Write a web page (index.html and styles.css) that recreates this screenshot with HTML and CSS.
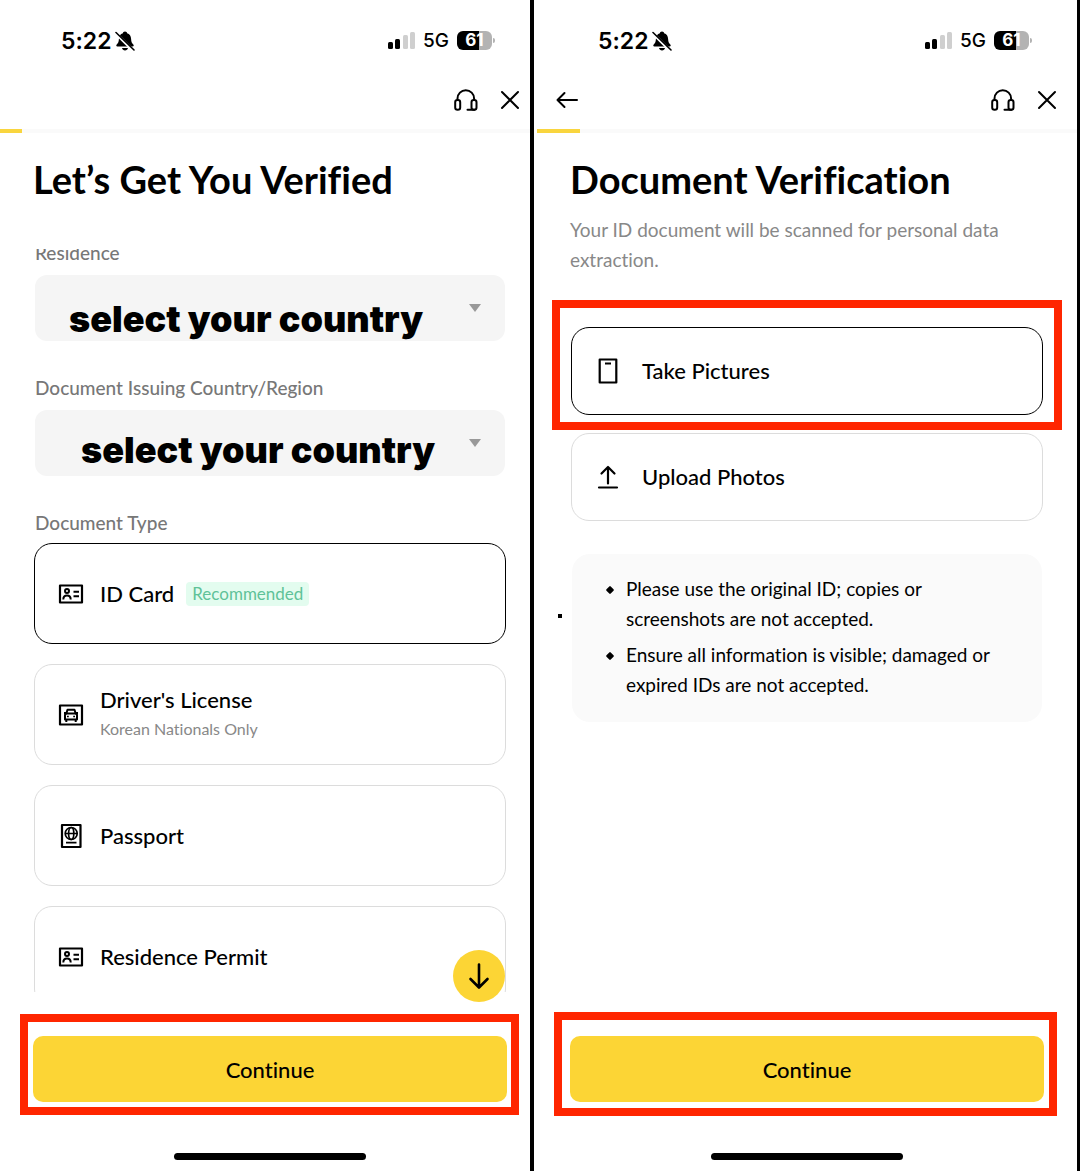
FILE: index.html
```html
<!DOCTYPE html>
<html lang="en">
<head>
    <meta charset="UTF-8">
    <meta name="viewport" content="width=device-width, initial-scale=1.0">
    <title>Identity Verification</title>
    <link rel="stylesheet" href="styles.css">
</head>
<body>
    <!-- Shared icons -->
    <svg class="sprite" aria-hidden="true">
        <symbol id="icon-bell-off" viewBox="0 0 20 20">
            <path d="M10 0.500c1.300 0 2 .8 2.100 1.700C14.700 3 16 5 16.100 8c.1 3 .9 4.200 2.200 5.500.8.900.5 2-.7 2H2.400c-1.200 0-1.500-1.100-.7-2C3 12.200 3.800 11 3.900 8 4 5 5.300 3 7.900 2.200 8 1.300 8.700.5 10 .5z"/>
            <path d="M7 17h6c-.3 1.600-1.500 2.500-3 2.500S7.300 18.600 7 17z"/>
            <path d="M0 1.500L18.500 20" stroke="#fff" stroke-width="3"/>
            <path d="M1 1.500L19 19" stroke="#000" stroke-width="1.600" stroke-linecap="round"/>
        </symbol>
        <symbol id="icon-signal" viewBox="0 0 27 17">
            <rect x="0" y="10" width="5" height="7" rx="1.500"/>
            <rect x="7" y="7" width="5" height="10" rx="1.500"/>
            <rect x="15" y="3" width="5" height="14" rx="1.500" fill="#cfcfcf"/>
            <rect x="22" y="0" width="5" height="17" rx="1.500" fill="#cfcfcf"/>
        </symbol>
        <symbol id="icon-headset" viewBox="0 0 24 24">
            <g fill="none" stroke="#000" stroke-width="2" stroke-linecap="round" stroke-linejoin="round">
                <path d="M3.500 12V10.500a8.300 8.300 0 0 1 16.600 0V12"/>
                <rect x="1.200" y="12" width="5" height="9.700" rx="2.300"/>
                <rect x="17.500" y="12" width="5" height="9.700" rx="2.300"/>
                <path d="M20.500 21.800H13.500"/>
            </g>
        </symbol>
        <symbol id="icon-close" viewBox="0 0 24 24">
            <path d="M4 4L20 20M20 4L4 20" fill="none" stroke="#000" stroke-width="2" stroke-linecap="round"/>
        </symbol>
        <symbol id="icon-back" viewBox="0 0 24 24">
            <path d="M22 12H2.500M9.500 5L2.500 12L9.500 19" fill="none" stroke="#000" stroke-width="2" stroke-linecap="round" stroke-linejoin="round"/>
        </symbol>
        <symbol id="icon-id" viewBox="0 0 28 28">
            <g fill="none" stroke="#000" stroke-width="2.200" stroke-linejoin="round">
                <rect x="3" y="5.500" width="22" height="17"/>
                <circle cx="10" cy="11" r="2" stroke-width="2"/>
                <path d="M6.300 19.500c0-2.900 1.500-4 3.700-4s3.700 1.100 3.700 4" stroke-width="2"/>
                <path d="M16.500 11.700H22M16.500 16.300H22" stroke-width="2"/>
            </g>
        </symbol>
        <symbol id="icon-car" viewBox="0 0 28 28">
            <g fill="none" stroke="#000" stroke-width="2.200" stroke-linejoin="round">
                <rect x="3" y="4.500" width="22" height="19"/>
                <path d="M9.300 12.500l1.200-3.700h7l1.200 3.700M8 18.500v-4.700l1.500-1.300h9l1.500 1.300v4.700z" stroke-width="2"/>
                <path d="M9.300 18.500v2.500M18.700 18.500v2.500M7 12h2M19 12h2" stroke-width="2"/>
                <path d="M10 15.600h1.800M16.200 15.600h1.800" stroke-width="1.500"/>
            </g>
        </symbol>
        <symbol id="icon-passport" viewBox="0 0 28 28">
            <g fill="none" stroke="#000" stroke-width="2.200" stroke-linejoin="round">
                <rect x="5" y="3" width="18.500" height="22"/>
                <g stroke-width="1.700">
                    <circle cx="14.200" cy="11.500" r="6"/>
                    <ellipse cx="14.200" cy="11.500" rx="2.600" ry="6"/>
                    <path d="M8.200 11.500h12M9 20.700h10.500"/>
                </g>
            </g>
        </symbol>
        <symbol id="icon-phone" viewBox="0 0 28 28">
            <path d="M5.700 2.500h16.600v23H5.700zM11 6.500h6" fill="none" stroke="#000" stroke-width="2.200" stroke-linejoin="round"/>
        </symbol>
        <symbol id="icon-upload" viewBox="0 0 28 28">
            <path d="M14 20.500V4M7.500 10.500L14 4l6.500 6.500M5 24.500h18" fill="none" stroke="#000" stroke-width="2.200" stroke-linecap="round" stroke-linejoin="round"/>
        </symbol>
        <symbol id="icon-down" viewBox="0 0 28 28">
            <path d="M14 2.500V25M5.500 17L14 25.500L22.500 17" fill="none" stroke="#000" stroke-width="2.600" stroke-linecap="round" stroke-linejoin="round"/>
        </symbol>
    </svg>

    <main class="screens">
        <!-- Step 1: document type -->
        <section class="screen screen-first">
            <div class="phone">
                <div class="status-bar">
                    <span class="time">5:22</span>
                    <svg class="bell"><use href="#icon-bell-off"/></svg>
                    <svg class="signal"><use href="#icon-signal"/></svg>
                    <span class="network">5G</span>
                    <span class="battery">61</span>
                </div>
                <nav class="nav-bar">
                    <button type="button" class="icon-button nav-right" aria-label="Support"><svg><use href="#icon-headset"/></svg></button>
                    <button type="button" class="icon-button" aria-label="Close"><svg><use href="#icon-close"/></svg></button>
                </nav>
                <div class="progress"><div class="progress-value" style="width: 4%"></div></div>

                <h1>Let’s Get You Verified</h1>

                <div class="scroll-wrap">
                    <form class="scroll-area">
                        <div class="form-group">
                            <label for="residence">Residence</label>
                            <div class="select-box">
                                <select id="residence">
                                    <option>select your country</option>
                                </select>
                            </div>
                        </div>
                        <div class="form-group">
                            <label for="issuing">Document Issuing Country/Region</label>
                            <div class="select-box">
                                <select id="issuing" class="indented">
                                    <option>select your country</option>
                                </select>
                            </div>
                        </div>
                        <fieldset class="doc-types">
                            <legend>Document Type</legend>
                            <label class="option">
                                <input type="radio" name="doc" checked>
                                <svg><use href="#icon-id"/></svg>
                                <span class="option-name">ID Card</span>
                                <span class="tag">Recommended</span>
                            </label>
                            <label class="option">
                                <input type="radio" name="doc">
                                <svg><use href="#icon-car"/></svg>
                                <span class="option-name">Driver's License<small>Korean Nationals Only</small></span>
                            </label>
                            <label class="option">
                                <input type="radio" name="doc">
                                <svg><use href="#icon-passport"/></svg>
                                <span class="option-name">Passport</span>
                            </label>
                            <label class="option">
                                <input type="radio" name="doc">
                                <svg><use href="#icon-id"/></svg>
                                <span class="option-name">Residence Permit</span>
                            </label>
                        </fieldset>
                    </form>
                    <button type="button" class="scroll-down" aria-label="Scroll down"><svg><use href="#icon-down"/></svg></button>
                </div>

                <div class="action marked">
                    <button type="button" class="continue">Continue</button>
                </div>
                <div class="home-indicator"></div>
            </div>
        </section>

        <!-- Step 2: document photos -->
        <section class="screen screen-second">
            <div class="phone">
                <div class="status-bar">
                    <span class="time">5:22</span>
                    <svg class="bell"><use href="#icon-bell-off"/></svg>
                    <svg class="signal"><use href="#icon-signal"/></svg>
                    <span class="network">5G</span>
                    <span class="battery">61</span>
                </div>
                <nav class="nav-bar">
                    <button type="button" class="icon-button" aria-label="Back"><svg><use href="#icon-back"/></svg></button>
                    <button type="button" class="icon-button nav-right" aria-label="Support"><svg><use href="#icon-headset"/></svg></button>
                    <button type="button" class="icon-button" aria-label="Close"><svg><use href="#icon-close"/></svg></button>
                </nav>
                <div class="progress"><div class="progress-value" style="width: 8%"></div></div>

                <h1>Document Verification</h1>
                <p class="subtitle">Your ID document will be scanned for personal data extraction.</p>

                <form class="methods">
                    <div class="marked">
                        <label class="option">
                            <input type="radio" name="method" checked>
                            <svg><use href="#icon-phone"/></svg>
                            <span class="option-name">Take Pictures</span>
                        </label>
                    </div>
                    <label class="option">
                        <input type="radio" name="method">
                        <svg><use href="#icon-upload"/></svg>
                        <span class="option-name">Upload Photos</span>
                    </label>
                </form>

                <div class="notice">
                    <ul>
                        <li>Please use the original ID; copies or screenshots are not accepted.</li>
                        <li>Ensure all information is visible; damaged or expired IDs are not accepted.</li>
                    </ul>
                </div>

                <div class="action marked">
                    <button type="button" class="continue">Continue</button>
                </div>
                <div class="home-indicator"></div>
            </div>
        </section>
    </main>
</body>
</html>
```
FILE: styles.css
```css
* {
    margin: 0;
    padding: 0;
    box-sizing: border-box;
}

body {
    font-family: Lato, "Open Sans", sans-serif;
    font-size: 20px;
    font-variant-ligatures: none;
    color: #000;
    background: #fff;
}

button {
    font: inherit;
    font-variant-ligatures: none;
    color: inherit;
    border: none;
    background: none;
    cursor: pointer;
}

.sprite {
    display: none;
}

.screens {
    display: grid;
    grid-template-columns: 89fr 91fr;
    height: 100vh;
    min-height: 1100px;
}

.screen {
    min-width: 0;
    min-height: 0;
    overflow: hidden;
}

.screen-first {
    border-right: 4px solid #000;
}

.screen-second {
    padding-left: 3px;
    border-right: 3px solid #000;
}

.phone {
    height: 100%;
    display: flex;
    flex-direction: column;
}

/* The first phone runs on under the divider */
.screen-first .phone {
    margin-right: -10px;
}

/* Status bar */
.status-bar {
    height: 80px;
    padding: 1px 45px 0 61px;
    display: flex;
    align-items: center;
    font-family: Inter, sans-serif;
}

.time {
    font-size: 23px;
    font-weight: 600;
}

.bell {
    width: 20px;
    height: 20px;
    margin-left: 4px;
}

.signal {
    width: 27px;
    height: 17px;
    margin-left: auto;
}

.network {
    margin: 0 8px;
    font-size: 19px;
    font-weight: 500;
}

.battery {
    position: relative;
    width: 35px;
    height: 19px;
    margin-right: 3px;
    border-radius: 6px;
    background: linear-gradient(to right, #000 62%, #b3b3b3 62%);
    color: #fff;
    font-size: 17px;
    font-weight: 700;
    line-height: 19px;
    text-align: center;
}

.battery::after {
    content: "";
    position: absolute;
    top: 7px;
    right: -3px;
    width: 2px;
    height: 5px;
    border-radius: 0 2px 2px 0;
    background: #b3b3b3;
}

/* Navigation */
.nav-bar {
    height: 40px;
    padding: 0 18px;
    margin-bottom: 9px;
    display: flex;
    align-items: center;
    gap: 20px;
}

.icon-button,
.icon-button svg {
    display: block;
    width: 24px;
    height: 24px;
}

.nav-right {
    margin-left: auto;
}

.progress {
    height: 4px;
    background: #fafafa;
}

.progress-value {
    height: 4px;
    background: #f9d53e;
}

h1 {
    margin: 24px 33px 0;
    font-size: 38px;
    font-weight: 700;
    line-height: 44px;
}

/* Document type form */
.scroll-wrap {
    position: relative;
    flex: 1;
    min-height: 0;
    margin: 48px 34px 0;
}

.scroll-area {
    height: 100%;
    overflow: hidden;
}

.form-group {
    margin: 0 1px 37px;
}

/* Scrolled a little past the first label */
.form-group:first-child {
    margin-top: -6px;
}

.form-group label,
legend {
    display: block;
    color: #777;
    font-size: 19px;
    font-weight: 500;
    line-height: 20px;
}

.select-box {
    position: relative;
    margin-top: 12px;
}

.select-box::after {
    content: "";
    position: absolute;
    top: 29px;
    right: 24px;
    border: 6px solid transparent;
    border-top: 8px solid #999;
    border-bottom: none;
}

select {
    display: block;
    width: 100%;
    height: 66px;
    padding: 22px 34px 0;
    appearance: none;
    border: none;
    border-radius: 12px;
    background: #f5f5f5;
    color: #000;
    font-family: Inter, sans-serif;
    font-size: 36px;
    font-weight: 900;
}

select.indented {
    padding: 14px 24px 0 46px;
}

.doc-types {
    border: none;
}

.doc-types .option {
    height: 101px;
    margin-bottom: 20px;
}

legend {
    margin-bottom: 10px;
    padding: 0 1px;
}

.option {
    position: relative;
    display: flex;
    align-items: center;
    gap: 12px;
    padding: 0 22px;
    border: 1px solid #dcdcdc;
    border-radius: 18px;
    cursor: pointer;
}

.option:has(input:checked) {
    border-color: #000;
}

.option input {
    position: absolute;
    opacity: 0;
}

.option svg {
    flex: none;
    width: 28px;
    height: 28px;
    margin-right: 3px;
}

.option-name {
    font-size: 22px;
    font-weight: 500;
    line-height: 28px;
}

.option-name small {
    display: block;
    color: #888;
    font-size: 16px;
    font-weight: 400;
    line-height: 30px;
}

.tag {
    padding: 0 6px;
    border-radius: 4px;
    background: #e3fcef;
    color: #5fc298;
    font-size: 17px;
    line-height: 24px;
}

.scroll-down {
    position: absolute;
    right: 1px;
    bottom: -10px;
    width: 52px;
    height: 52px;
    border-radius: 50%;
    background: #fcd535;
}

.scroll-down svg {
    display: block;
    width: 28px;
    height: 28px;
    margin: auto;
}

/* Photo methods */
.subtitle {
    margin: 14px 33px 0;
    color: #888;
    font-size: 19px;
    line-height: 30px;
}

.methods {
    display: grid;
    gap: 18px;
    margin: 52px 34px 0;
}

.methods .option {
    height: 88px;
    gap: 17px;
}

.notice {
    position: relative;
    margin: 33px 35px 0;
    padding: 20px 36px 22px 34px;
    border-radius: 18px;
    background: #fafafa;
    font-size: 19px;
    line-height: 30px;
}

.notice::before {
    content: "";
    position: absolute;
    left: -14px;
    top: 60px;
    width: 4px;
    height: 4px;
    background: #000;
}

.notice ul {
    display: grid;
    gap: 6px;
    list-style: none;
}

.notice li {
    position: relative;
    padding-left: 20px;
}

.notice li::before {
    content: "";
    position: absolute;
    left: 1px;
    top: 13px;
    width: 6px;
    height: 6px;
    border-radius: 1px;
    background: #000;
    transform: rotate(45deg);
}

/* Bottom action */
.action {
    margin: 44px 33px 0;
}

.screen-second .action {
    margin-top: auto;
}

.continue {
    display: block;
    width: 100%;
    height: 66px;
    border-radius: 10px;
    background: #fcd535;
    font-size: 22px;
    font-weight: 500;
}

.home-indicator {
    flex: none;
    width: 192px;
    height: 7px;
    margin: 51px auto 11px;
    border-radius: 4px;
    background: #000;
}

/* Red highlight frames */
.marked {
    position: relative;
}

.marked::after {
    content: "";
    position: absolute;
    inset: -22px -12px -13px -13px;
    border: 8px solid #ff2600;
    pointer-events: none;
}

.screen-second .marked::after {
    inset: -24px -13px -14px -16px;
}

.screen-second .methods .marked::after {
    inset: -27px -19px -15px;
}
```
